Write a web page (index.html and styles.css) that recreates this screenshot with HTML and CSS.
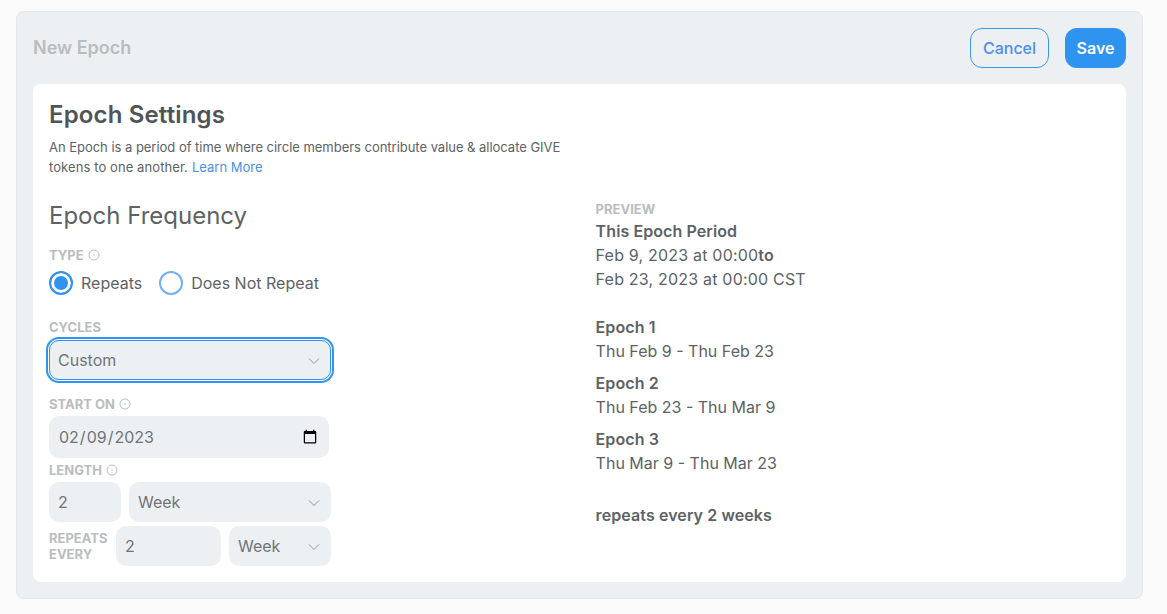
FILE: index.html
```html
<!DOCTYPE html>
<html>

<head>
    <title>New Epoch</title>
    <link rel="stylesheet" href="styles.css">
</head>

<body>
    <div class="panel">
        <div class="panel-header">
            <h2 class="panel-title">New Epoch</h2>
            <div class="actions">
                <button class="btn btn-outline" type="button">Cancel</button>
                <button class="btn btn-primary" type="button">Save</button>
            </div>
        </div>
        <div class="card">
            <h1 class="card-title">Epoch Settings</h1>
            <div class="intro">
                <div class="intro-first">An Epoch is a period of time where circle members contribute value &amp; allocate GIVE</div>
                <div class="intro-second"><span class="intro-text">tokens to one another.</span><a href="#">Learn More</a></div>
            </div>

            <div class="columns">
                <form class="settings">
                    <h3 class="section-title">Epoch Frequency</h3>

                    <div class="label label-type">TYPE
                        <svg class="info" viewBox="0 0 12 12"><circle cx="6" cy="6" r="5"></circle><circle class="dot" cx="6" cy="6" r="0.8"></circle></svg>
                    </div>
                    <div class="radios">
                        <label class="radio"><span class="radio-mark checked"></span>Repeats</label>
                        <label class="radio"><span class="radio-mark"></span>Does Not Repeat</label>
                    </div>

                    <div class="label label-cycles">CYCLES</div>
                    <div class="select-wrap focused">
                        <select class="field">
                            <option>Custom</option>
                        </select>
                        <svg class="chevron" viewBox="0 0 12 12"><path d="M1 3.5l5 5 5-5"></path></svg>
                    </div>

                    <div class="label label-start">START ON
                        <svg class="info" viewBox="0 0 12 12"><circle cx="6" cy="6" r="5"></circle><circle class="dot" cx="6" cy="6" r="0.8"></circle></svg>
                    </div>
                    <input class="field field-date" type="date" value="2023-02-09">

                    <div class="label label-length">LENGTH
                        <svg class="info" viewBox="0 0 12 12"><circle cx="6" cy="6" r="5"></circle><circle class="dot" cx="6" cy="6" r="0.8"></circle></svg>
                    </div>
                    <div class="row">
                        <input class="field field-length" type="text" value="2">
                        <div class="select-wrap grow">
                            <select class="field">
                                <option>Week</option>
                            </select>
                            <svg class="chevron" viewBox="0 0 12 12"><path d="M1 3.5l5 5 5-5"></path></svg>
                        </div>
                    </div>

                    <div class="row row-repeats">
                        <div class="label label-repeats">REPEATS<br>EVERY</div>
                        <input class="field field-repeats" type="text" value="2">
                        <div class="select-wrap grow">
                            <select class="field">
                                <option>Week</option>
                            </select>
                            <svg class="chevron" viewBox="0 0 12 12"><path d="M1 3.5l5 5 5-5"></path></svg>
                        </div>
                    </div>
                </form>

                <div class="preview">
                    <div class="label label-preview">PREVIEW</div>
                    <div class="line"><b>This Epoch Period</b></div>
                    <div class="line date-line">Feb 9, 2023 at 00:00<b>to</b></div>
                    <div class="line date-line">Feb 23, 2023 at 00:00 CST</div>

                    <div class="epoch epoch-first">
                        <div class="line"><b>Epoch 1</b></div>
                        <div class="line">Thu Feb 9 - Thu Feb 23</div>
                    </div>
                    <div class="epoch">
                        <div class="line"><b>Epoch 2</b></div>
                        <div class="line">Thu Feb 23 - Thu Mar 9</div>
                    </div>
                    <div class="epoch">
                        <div class="line"><b>Epoch 3</b></div>
                        <div class="line">Thu Mar 9 - Thu Mar 23</div>
                    </div>

                    <div class="line repeats-note"><b>repeats every 2 weeks</b></div>
                </div>
            </div>
        </div>
    </div>
</body>

</html>
```

FILE: styles.css
```css
* {
    box-sizing: border-box;
}

body {
    margin: 0;
    padding: 11px 24px 15px 16px;
    background-color: #fafafa;
    font-family: Inter, sans-serif;
    color: #5c6265;
}

.panel {
    height: 588px;
    padding: 16px;
    background-color: #edf0f3;
    border: 1px solid #e4e6e9;
    border-radius: 8px;
}

.panel-header {
    display: flex;
    justify-content: space-between;
    align-items: center;
    height: 40px;
    margin-bottom: 16px;
}

.panel-title {
    margin: 0 0 2px;
    font-size: 18px;
    font-weight: 600;
    color: #b8bdbf;
}

.actions {
    display: flex;
    gap: 16px;
}

.btn {
    height: 40px;
    border-radius: 12px;
    font-family: Inter, sans-serif;
    font-size: 16px;
    font-weight: 500;
}

.btn-outline {
    width: 79px;
    background: transparent;
    border: 1px solid #3d98f0;
    color: #4a8fe8;
}

.btn-primary {
    width: 61px;
    background-color: #2f93f0;
    border: none;
    color: white;
    font-weight: 600;
}

.card {
    height: 498px;
    padding: 16px;
    background-color: white;
    border-radius: 8px;
}

.card-title {
    margin: 0;
    font-size: 24px;
    line-height: 30px;
    font-weight: 600;
    letter-spacing: 0.15px;
    color: #4f5456;
}

.intro {
    margin-top: 7px;
    font-size: 13px;
    line-height: 20px;
}

.intro-first {
    letter-spacing: -0.028px;
}

.intro-second {
    display: flex;
    gap: 4px;
}

.intro-text {
    letter-spacing: 0.09px;
}

.intro a {
    color: #4a8fe8;
    text-decoration: none;
}

.columns {
    display: grid;
    grid-template-columns: 546.6px 1fr;
    margin-top: 24px;
}

.section-title {
    margin: 0;
    font-size: 24px;
    line-height: 30px;
    font-weight: 400;
}

.label {
    display: flex;
    align-items: center;
    gap: 4px;
    font-size: 13px;
    line-height: 16px;
    font-weight: 700;
    color: #b8bdbf;
}

.info {
    width: 12px;
    height: 12px;
    fill: none;
    stroke: #b8bdbf;
}

.info .dot {
    fill: #b8bdbf;
    stroke: none;
}

.label-type {
    margin-top: 16px;
}

.radios {
    display: flex;
    gap: 17px;
    margin-top: 8px;
}

.radio {
    display: flex;
    align-items: center;
    gap: 8px;
    font-size: 16px;
    line-height: 24px;
}

.radio-mark {
    width: 24px;
    height: 24px;
    border: 2px solid #6fb1f2;
    border-radius: 50%;
}

.radio-mark.checked {
    border-color: #2f93f0;
    background-color: #2f93f0;
    box-shadow: inset 0 0 0 3px white;
}

.label-cycles {
    margin-top: 24px;
}

.select-wrap {
    position: relative;
}

.select-wrap.focused {
    width: 282px;
    margin-top: 5px;
    border-radius: 10px;
    box-shadow: 0 0 0 1px white, 0 0 0 3px #2f93f0;
}

.grow {
    flex: 1;
}

.field {
    display: block;
    width: 100%;
    height: 40px;
    padding: 0 9px;
    background-color: #edf0f3;
    border: none;
    border-radius: 10px;
    outline: none;
    appearance: none;
    font-family: Inter, sans-serif;
    font-size: 16px;
    color: #6f7578;
}

.focused .field {
    border: 1px solid #2f93f0;
    padding: 0 8px;
}

.chevron {
    position: absolute;
    top: 15px;
    right: 11px;
    width: 12px;
    height: 12px;
    fill: none;
    stroke: #8f9597;
    stroke-width: 1;
    pointer-events: none;
}

.label-start {
    margin-top: 16px;
}

.field-date {
    width: 280px;
    height: 42px;
    margin-top: 4px;
    padding: 0 9px;
}

.label-length {
    margin-top: 4px;
}

.row {
    display: flex;
    align-items: center;
    gap: 8px;
    width: 282px;
    margin-top: 4px;
}

.field-length {
    width: 72px;
}

.row-repeats {
    gap: 0;
}

.label-repeats {
    display: block;
    width: 67px;
}

.field-repeats {
    width: 105px;
    margin-right: 8px;
}

.label-preview {
    margin-bottom: 2px;
}

.line {
    font-size: 16px;
    line-height: 24px;
}

.line b {
    font-weight: 600;
    letter-spacing: 0.09px;
}

.date-line {
    letter-spacing: 0.2px;
}

.epoch {
    margin-top: 8px;
}

.epoch-first {
    margin-top: 24px;
}

.repeats-note {
    margin-top: 28px;
}
```
